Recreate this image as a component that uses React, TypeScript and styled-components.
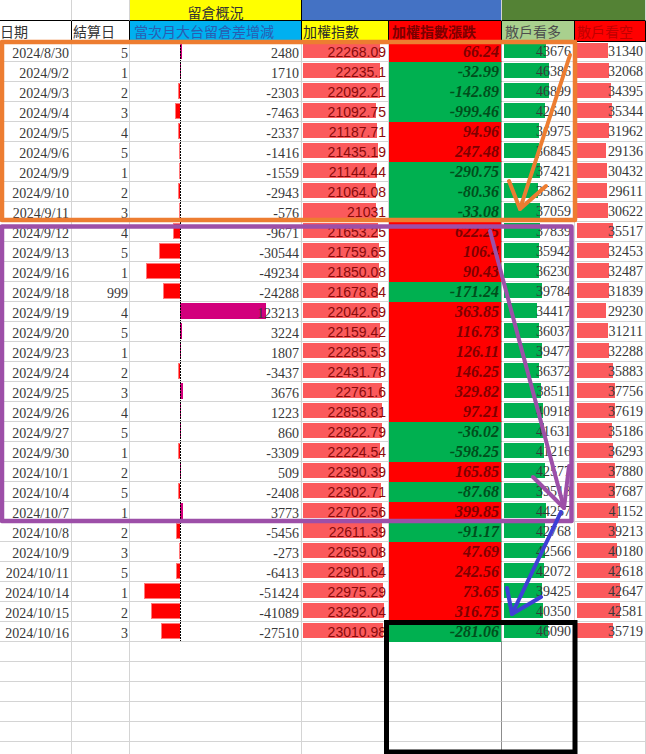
import React from 'react';
import styled, { createGlobalStyle } from 'styled-components';

const GlobalStyle = createGlobalStyle`
  html, body { margin: 0; padding: 0; background: #ffffff; overflow: hidden; }
  #root { width: 646px; height: 754px; }
`;

const COLS = '72px 58px 172px 87px 113px 73px 71px';
const GRID = '#d4d4d4';
const SERIF = '"Liberation Serif", "Times New Roman", serif';
const SANS = '"Liberation Sans", Arial, sans-serif';
const CJK = '"Noto Sans CJK TC", "Noto Sans CJK SC", sans-serif';

type Rec = {
  date: string;
  settle: string;
  oi: number;
  idx: string;
  chg: string;
  bull: number;
  bear: number;
};

const RAW = `2024/8/30,5,2480,22268.09,66.24,43676,31340
2024/9/2,1,1710,22235.1,-32.99,46386,32068
2024/9/3,2,-2303,22092.21,-142.89,46899,34395
2024/9/4,3,-7463,21092.75,-999.46,42640,35344
2024/9/5,4,-2337,21187.71,94.96,36975,31962
2024/9/6,5,-1416,21435.19,247.48,36845,29136
2024/9/9,1,-1559,21144.44,-290.75,37421,30432
2024/9/10,2,-2943,21064.08,-80.36,35862,29611
2024/9/11,3,-576,21031,-33.08,37059,30622
2024/9/12,4,-9671,21653.25,622.25,37839,35517
2024/9/13,5,-30544,21759.65,106.4,35942,32453
2024/9/16,1,-49234,21850.08,90.43,36230,32487
2024/9/18,999,-24288,21678.84,-171.24,39784,31839
2024/9/19,4,123213,22042.69,363.85,34417,29230
2024/9/20,5,3224,22159.42,116.73,36037,31211
2024/9/23,1,1807,22285.53,126.11,39477,32288
2024/9/24,2,-3437,22431.78,146.25,36372,35883
2024/9/25,3,3676,22761.6,329.82,38511,37756
2024/9/26,4,1223,22858.81,97.21,40918,37619
2024/9/27,5,860,22822.79,-36.02,41631,35186
2024/9/30,1,-3309,22224.54,-598.25,41216,36293
2024/10/1,2,509,22390.39,165.85,42577,37880
2024/10/4,5,-2408,22302.71,-87.68,39518,37687
2024/10/7,1,3773,22702.56,399.85,44257,41152
2024/10/8,2,-5456,22611.39,-91.17,42768,39213
2024/10/9,3,-273,22659.08,47.69,42566,40180
2024/10/11,5,-6413,22901.64,242.56,42072,42618
2024/10/14,1,-51424,22975.29,73.65,39425,42647
2024/10/15,2,-41089,23292.04,316.75,40350,42581
2024/10/16,3,-27510,23010.98,-281.06,46090,35719`;

const rows: Rec[] = RAW.split('\n').map((line) => {
  const [date, settle, oi, idx, chg, bull, bear] = line.split(',');
  return { date, settle, oi: Number(oi), idx, chg, bull: Number(bull), bear: Number(bear) };
});

const IDX_MAX = 23292.04;

/* ---------- layout ---------- */

const Sheet = styled.div`
  position: relative;
  width: 646px;
  height: 754px;
  overflow: hidden;
  background: #ffffff;
  font-family: ${SERIF};
`;

const Row = styled.div<{ $h: number }>`
  display: grid;
  grid-template-columns: ${COLS};
  height: ${(p) => p.$h}px;
`;

const Cell = styled.div`
  position: relative;
  box-sizing: border-box;
  min-width: 0;
  overflow: hidden;
  display: flex;
  align-items: flex-end;
  justify-content: flex-end;
  border-right: 1px solid ${GRID};
  border-bottom: 1px solid ${GRID};
`;

/* ---------- header ---------- */

const TopCell = styled(Cell)<{ $bg?: string; $edge?: string; $span?: number }>`
  grid-column: span ${(p) => p.$span ?? 1};
  justify-content: center;
  background: ${(p) => p.$bg ?? '#ffffff'};
  border-right-color: ${(p) => p.$edge ?? GRID};
  border-bottom-color: #000000;
  font-family: ${CJK};
  font-size: 14px;
  line-height: 14px;
  color: #333333;
  padding-bottom: 1px;
`;

const HeadCell = styled(Cell)<{ $bg?: string; $fg?: string; $pl?: number; $bold?: boolean }>`
  justify-content: flex-start;
  align-items: center;
  background: ${(p) => p.$bg ?? '#ffffff'};
  color: ${(p) => p.$fg ?? '#333333'};
  border-right-color: #000000;
  border-bottom-color: #000000;
  padding-left: ${(p) => p.$pl ?? 1}px;
  font-family: ${CJK};
  font-size: 14px;
  line-height: 14px;
  font-weight: ${(p) => (p.$bold ? 700 : 400)};
  white-space: nowrap;
`;

/* ---------- data cells ---------- */

const NumCell = styled(Cell)<{ $pr?: number; $pb?: number }>`
  padding-right: ${(p) => p.$pr ?? 2}px;
  padding-bottom: ${(p) => p.$pb ?? 0}px;
`;

const OiCell = styled(NumCell)<{ $axis?: boolean }>`
  &::after {
    content: '';
    display: ${(p) => (p.$axis ? 'block' : 'none')};
    position: absolute;
    left: 50px;
    top: 0;
    bottom: -1px;
    width: 1px;
    background: repeating-linear-gradient(to bottom, #000 0 2px, transparent 2px 3px);
    z-index: 2;
  }
`;

const ChangeCell = styled(NumCell)<{ $up: boolean }>`
  background: ${(p) => (p.$up ? '#ff0000' : '#00b050')};
  border-bottom-color: ${(p) => (p.$up ? '#ff0000' : '#00b050')};
  border-right-color: #a8a8a8;
`;

const EmptyCell = styled(Cell)<{ $dark?: boolean }>`
  border-right-color: ${(p) => (p.$dark ? '#8c8c8c' : GRID)};
`;

const Txt = styled.span<{ $color?: string }>`
  position: relative;
  z-index: 1;
  font-family: ${SERIF};
  font-size: 14px;
  line-height: 14px;
  color: ${(p) => p.$color ?? '#383838'};
  white-space: nowrap;
`;

const SansTxt = styled(Txt)`
  font-family: ${SANS};
  color: #8a0b0b;
`;

const ChangeTxt = styled(Txt)<{ $up: boolean }>`
  font-size: 16px;
  line-height: 16px;
  font-weight: 700;
  font-style: italic;
  color: ${(p) => (p.$up ? '#7e0000' : '#004f1c')};
`;

const Bar = styled.span<{ $color: string; $left: number }>`
  position: absolute;
  top: 1px;
  height: 15px;
  left: ${(p) => p.$left}px;
  background: ${(p) => p.$color};
`;

const OiBar = styled.span<{ $neg: boolean }>`
  position: absolute;
  top: 1px;
  height: 16px;
  box-sizing: border-box;
  ${(p) =>
    p.$neg
      ? `right: calc(100% - 50px); background: #ff0000; border: 1px solid #ff7a7a; border-right: none;`
      : `left: 50px; background: #d2007c;`}
`;

/* ---------- overlay ---------- */

const Overlay = styled.svg`
  position: absolute;
  left: 0;
  top: 0;
  width: 646px;
  height: 754px;
  pointer-events: none;
  z-index: 5;
`;

const DataRow: React.FC<{ r: Rec }> = ({ r }) => {
  const up = !r.chg.startsWith('-');
  const oiW = Math.max(Math.abs(r.oi) * 0.0007, 1);
  const idxW = (Number(r.idx) / IDX_MAX) * 81;
  return (
    <Row $h={20}>
      <NumCell $pr={2}>
        <Txt>{r.date}</Txt>
      </NumCell>
      <NumCell $pr={1}>
        <Txt>{r.settle}</Txt>
      </NumCell>
      <OiCell $pr={2} $axis>
        <OiBar $neg={r.oi < 0} style={{ width: `${oiW}px` }} />
        <Txt>{r.oi}</Txt>
      </OiCell>
      <NumCell $pr={2} $pb={2}>
        <Bar $color="#fb5a5c" $left={1} style={{ width: `${idxW}px` }} />
        <SansTxt>{r.idx}</SansTxt>
      </NumCell>
      <ChangeCell $up={up} $pr={2} $pb={1}>
        <ChangeTxt $up={up}>{r.chg}</ChangeTxt>
      </ChangeCell>
      <NumCell $pr={3} $pb={2}>
        <Bar $color="#00b050" $left={2} style={{ width: `${r.bull * 0.00096}px` }} />
        <Txt>{r.bull}</Txt>
      </NumCell>
      <NumCell $pr={2} $pb={2}>
        <Bar $color="#fb5a5c" $left={2} style={{ width: `${r.bear * 0.001}px` }} />
        <Txt>{r.bear}</Txt>
      </NumCell>
    </Row>
  );
};

const EmptyRow: React.FC = () => (
  <Row $h={20}>
    <EmptyCell />
    <EmptyCell />
    <EmptyCell />
    <EmptyCell />
    <EmptyCell $dark />
    <EmptyCell />
    <EmptyCell />
  </Row>
);

export default function App() {
  return (
    <>
      <GlobalStyle />
      <Sheet>
        <Row $h={21}>
          <TopCell />
          <TopCell />
          <TopCell $bg="#ffff00" $edge="#000000">留倉概況</TopCell>
          <TopCell $bg="#4472c4" $span={2} />
          <TopCell $bg="#548235" $span={2} />
        </Row>
        <Row $h={21}>
          <HeadCell $pl={0}>日期</HeadCell>
          <HeadCell $pl={1}>結算日</HeadCell>
          <HeadCell $bg="#00b0f0" $fg="#2a5db0" $pl={4}>當次月大台留倉差增減</HeadCell>
          <HeadCell $bg="#ffff00" $fg="#2b2b2b" $pl={1}>加權指數</HeadCell>
          <HeadCell $bg="#ff0000" $fg="#7a0000" $pl={3} $bold>加權指數漲跌</HeadCell>
          <HeadCell $bg="#a9d08e" $fg="#4d4d4d" $pl={3}>散戶看多</HeadCell>
          <HeadCell $bg="#ff0000" $fg="#c00000" $pl={2}>散戶看空</HeadCell>
        </Row>
        {rows.map((r) => (
          <DataRow key={r.date} r={r} />
        ))}
        {Array.from({ length: 6 }).map((_, i) => (
          <EmptyRow key={i} />
        ))}
        <Overlay viewBox="0 0 646 754">
          <g fill="none" strokeLinecap="round" strokeLinejoin="round">
            <rect x="2" y="42" width="573" height="178" stroke="#ed7d31" strokeWidth="4.5" />
            <rect x="2" y="226.5" width="569.5" height="294.5" stroke="#9d4fa8" strokeWidth="4.5" />
            <line x1="570" y1="55" x2="520" y2="209" stroke="#ed7d31" strokeWidth="4" />
            <polyline points="509,181 520,209 546,186" stroke="#ed7d31" strokeWidth="4" />
            <line x1="490" y1="231" x2="564" y2="508" stroke="#9d4fa8" strokeWidth="4" />
            <polyline points="533,477 564,508 569,466" stroke="#9d4fa8" strokeWidth="4" />
            <line x1="561" y1="512" x2="512" y2="614" stroke="#3f3fd6" strokeWidth="4" />
            <polyline points="507,588 512,614 541,597" stroke="#3f3fd6" strokeWidth="4" />
            <rect x="386.5" y="622.5" width="188.5" height="129.5" stroke="#000000" strokeWidth="5" strokeLinecap="butt" strokeLinejoin="miter" />
          </g>
        </Overlay>
      </Sheet>
    </>
  );
}
